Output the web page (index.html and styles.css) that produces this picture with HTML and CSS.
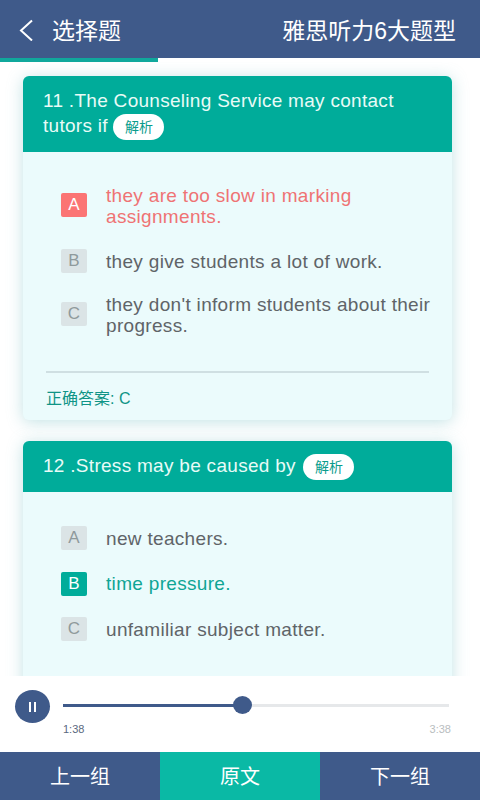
FILE: index.html
```html
<!DOCTYPE html>
<html lang="zh">
<head>
<meta charset="utf-8">
<title>选择题</title>
<link rel="stylesheet" href="styles.css">
</head>
<body>
<div class="app">
  <header class="topbar">
    <div class="topbar-left">
      <svg class="back" viewBox="0 0 16 24" width="16" height="24"><path d="M14 3.500 3 13.500l11 10" fill="none" stroke="#fff" stroke-width="2"/></svg>
      <span>选择题</span>
    </div>
    <span>雅思听力6大题型</span>
  </header>
  <div class="progress"><div class="progress-fill"></div></div>
  <main class="scroller">
    <section class="card">
      <div class="card-head">11 .The Counseling Service may contact tutors if <span class="pill tight">解析</span></div>
      <div class="card-body first">
        <div class="option wrong tall"><span class="letter">A</span><span class="opt-text">they are too slow in marking assignments.</span></div>
        <div class="option"><span class="letter">B</span><span class="opt-text">they give students a lot of work.</span></div>
        <div class="option tall"><span class="letter">C</span><span class="opt-text">they don't inform students about their progress.</span></div>
      </div>
      <div class="answer">正确答案: C</div>
    </section>
    <section class="card">
      <div class="card-head single">12 .Stress may be caused by <span class="pill">解析</span></div>
      <div class="card-body second">
        <div class="option"><span class="letter">A</span><span class="opt-text">new teachers.</span></div>
        <div class="option right"><span class="letter">B</span><span class="opt-text">time pressure.</span></div>
        <div class="option"><span class="letter">C</span><span class="opt-text">unfamiliar subject matter.</span></div>
      </div>
    </section>
  </main>
  <div class="player">
    <button class="pause"><span></span><span></span></button>
    <div class="track-wrap">
      <div class="track"><div class="played"></div><div class="knob"></div></div>
      <div class="times"><span class="now">1:38</span><span class="total">3:38</span></div>
    </div>
  </div>
  <nav class="tabs">
    <div class="tab">上一组</div>
    <div class="tab active">原文</div>
    <div class="tab">下一组</div>
  </nav>
</div>
</body>
</html>
```

FILE: styles.css
```css
* { box-sizing: border-box; }
html, body { margin: 0; padding: 0; }
body {
  width: 480px;
  height: 800px;
  overflow: hidden;
  background: #fff;
  font-family: "Liberation Sans", "Noto Sans CJK SC", sans-serif;
}
.app { width: 480px; height: 800px; display: flex; flex-direction: column; }

.topbar {
  height: 58px;
  flex: none;
  background: #3f5a8a;
  color: #fff;
  display: flex;
  align-items: center;
  justify-content: space-between;
  padding: 0 24px 0 18px;
  font-size: 23px;
}
.topbar-left { display: flex; align-items: center; gap: 18px; }
.progress { height: 4px; flex: none; background: #fff; }
.progress-fill { width: 158px; height: 4px; background: #10a89c; }

.scroller {
  flex: 1;
  min-height: 0;
  overflow: hidden;
  padding: 14px 28px 0 23px;
  background: #fff;
}
.card {
  background: #ebfbfc;
  border-radius: 6px;
  box-shadow: 0 2px 16px rgba(110, 185, 190, .42);
  margin-bottom: 21px;
}
.card-head {
  background: #00ac9a;
  color: #e8fbf7;
  border-radius: 6px 6px 0 0;
  font-size: 19px;
  letter-spacing: .29px;
  line-height: 25px;
  height: 76px;
  padding: 12px 30px 0 20px;
}
.card-head.single { height: 51px; }
.pill {
  display: inline-block;
  width: 51px;
  height: 26px;
  margin-left: 2px;
  border-radius: 13px;
  background: #fff;
  color: #0a9c8c;
  font-size: 14px;
  letter-spacing: 0;
  line-height: 26px;
  text-align: center;
  vertical-align: 0;
}
.pill.tight { margin-left: 0; }
.card-body { padding: 0 18px 0 38px; display: flex; flex-direction: column; }
.card-body.first { padding-top: 31px; gap: 22px; }
.card-body.first .option:last-child { margin-top: -3px; }
.card-body.second { padding-top: 34px; gap: 21.500px; height: 260px; }
.option { display: flex; align-items: center; gap: 19px; font-size: 19px; letter-spacing: .32px; line-height: 21px; color: #5f6468; min-height: 24px; }
.tall .opt-text { padding-top: 2px; }
.letter {
  flex: none;
  width: 26px;
  height: 24px;
  border-radius: 2px;
  background: #dbe4e6;
  color: #8f9a9c;
  font-size: 17px;
  letter-spacing: 0;
  line-height: 24px;
  text-align: center;
}
.wrong { color: #ef7374; }
.wrong .letter { background: #fb7474; color: #fff; }
.right { color: #0fa595; }
.right .letter { background: #00ac9a; color: #fff; }
.answer {
  margin: 35px 23px 0;
  border-top: 2px solid #cfdfe2;
  height: 49px;
  color: #0f9486;
  font-size: 16px;
  line-height: 52px;
}

.player {
  height: 76px;
  flex: none;
  background: #fff;
  display: flex;
  padding: 14px 31px 0 15px;
  gap: 13px;
  position: relative;
}
.pause {
  width: 35px;
  height: 33px;
  flex: none;
  border: 0;
  padding: 0;
  border-radius: 50%;
  background: #3f5a8a;
  display: flex;
  align-items: center;
  justify-content: center;
  gap: 2.500px;
}
.pause span { width: 2.500px; height: 10px; background: #fff; }
.track-wrap { flex: 1; padding-top: 14px; }
.track { height: 3px; background: #e6e8ea; position: relative; }
.played { width: 180px; height: 3px; background: #3f5a8a; }
.knob {
  position: absolute;
  left: 170px;
  top: -8px;
  width: 19px;
  height: 18px;
  border-radius: 50%;
  background: #3f5a8a;
}
.times { display: flex; justify-content: space-between; margin-top: 14px; margin-right: -2px; font-size: 11px; line-height: 16px; }
.now { color: #5a6880; }
.total { color: #b9bdc0; }

.tabs { height: 48px; flex: none; display: flex; }
.tab {
  flex: 1;
  background: #3f5a8a;
  color: #fff;
  font-size: 20px;
  line-height: 50px;
  text-align: center;
}
.tab.active { background: #0ab9a5; }
```
